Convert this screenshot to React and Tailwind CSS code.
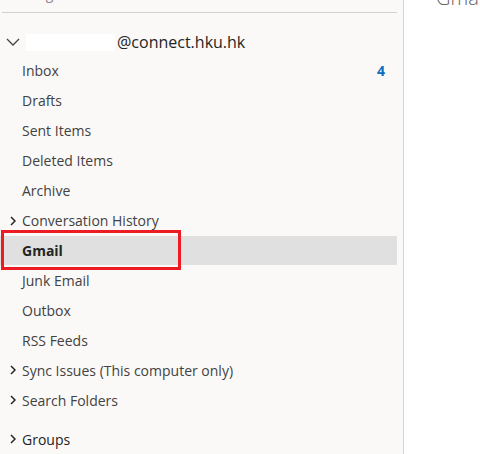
import React from "react";

const folders = [
  { name: "Inbox", count: 4 },
  { name: "Drafts" },
  { name: "Sent Items" },
  { name: "Deleted Items" },
  { name: "Archive" },
  { name: "Conversation History", arrow: true },
  { name: "Gmail", selected: true },
  { name: "Junk Email" },
  { name: "Outbox" },
  { name: "RSS Feeds" },
  { name: "Sync Issues (This computer only)", arrow: true },
  { name: "Search Folders", arrow: true },
];

function Chevron() {
  return (
    <svg width="6" height="10" viewBox="0 0 6 10" className="text-[#242424]">
      <path d="M1 1l4 4-4 4" fill="none" stroke="currentColor" strokeWidth="1.5" />
    </svg>
  );
}

function FolderRow({ folder }) {
  return (
    <div
      className={
        "relative h-[30px] flex items-center mr-[6px] " +
        (folder.selected ? "bg-[#e0e0e0]" : "")
      }
    >
      <div className="w-[22px] flex justify-end pr-[6px]">
        {folder.arrow && <Chevron />}
      </div>
      <span
        className={
          "text-[14px] " +
          (folder.selected ? "font-bold text-[#242424]" : "text-[#424242]")
        }
      >
        {folder.name}
      </span>
      {folder.count && (
        <span className="ml-auto mr-[12px] text-[14px] font-bold text-[#0f6cbd]">
          {folder.count}
        </span>
      )}
      {folder.selected && (
        <div className="absolute left-[1px] top-[-6px] w-[180px] h-[40px] border-[3px] border-[#ed1c24]" />
      )}
    </div>
  );
}

export default function App() {
  return (
    <div
      className="w-[480px] h-[454px] overflow-hidden flex bg-white"
      style={{ fontFamily: '"Open Sans", "Noto Sans", sans-serif' }}
    >
      <div className="w-[404px] h-full bg-[#faf9f8] border-r border-[#d4d4d4] flex flex-col">
        <div className="h-[12px] overflow-hidden relative">
          <span className="absolute left-[22px] top-[-17px] text-[14px] text-[#8a8886]">
            Drag
          </span>
        </div>
        <div className="h-px bg-[#d1d1d1] mx-[2px] mr-[6px]" />
        <div className="h-[43px] flex items-center pt-[16px]">
          <div className="w-[26px] flex justify-center">
            <svg width="14" height="8" viewBox="0 0 14 8" className="text-[#424242]">
              <path d="M1 1l6 6 6-6" fill="none" stroke="currentColor" strokeWidth="1.3" />
            </svg>
          </div>
          <div className="w-[89px] h-[17px] bg-white" />
          <span className="ml-[2px] text-[16px] text-[#242424]">@connect.hku.hk</span>
        </div>
        {folders.map((f) => (
          <FolderRow key={f.name} folder={f} />
        ))}
        <div className="h-[39px] flex items-end">
          <div className="h-[30px] flex items-center">
            <div className="w-[22px] flex justify-end pr-[6px]">
              <Chevron />
            </div>
            <span className="text-[14px] text-[#242424]">Groups</span>
          </div>
        </div>
      </div>
      <div className="flex-1 relative overflow-hidden">
        <span className="absolute left-[32px] top-[-17px] text-[20px] font-light text-[#616161]">
          Gmail
        </span>
      </div>
    </div>
  );
}
